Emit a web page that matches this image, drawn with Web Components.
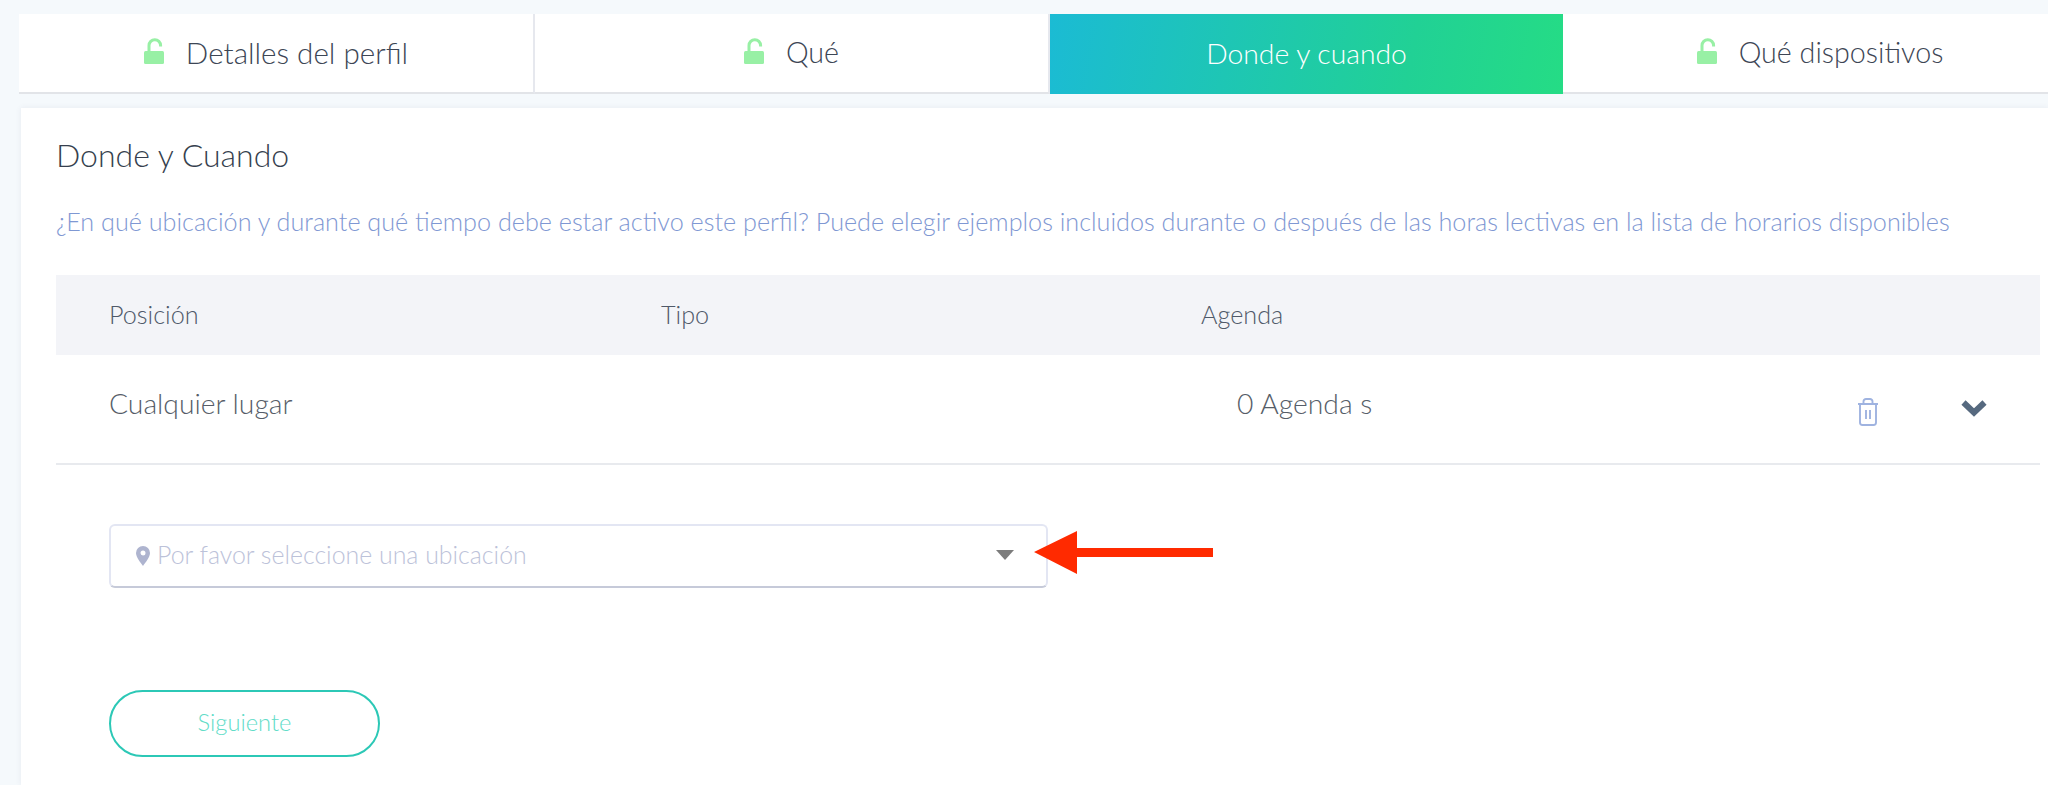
<!DOCTYPE html>
<html lang="es">
<head>
<meta charset="utf-8">
<title>Donde y cuando</title>
<style>
    html, body { margin: 0; padding: 0; height: 785px; overflow: hidden; background: #f5f9fc; }
    body { font-family: "Lato", "Noto Sans", sans-serif; font-weight: 300; }
</style>
</head>
<body>
<profile-page>
    <profile-tabs slot="tabs">
        <profile-tab locked>Detalles del perfil</profile-tab>
        <profile-tab locked style="font-size:28.7px">Qué</profile-tab>
        <profile-tab active style="font-size:28.3px">Donde y cuando</profile-tab>
        <profile-tab locked style="font-size:28.7px">Qué dispositivos</profile-tab>
    </profile-tabs>
    <where-card></where-card>
</profile-page>

<script>
class ProfilePage extends HTMLElement {
    constructor() {
        super();
        this.attachShadow({ mode: 'open' });
        this.shadowRoot.innerHTML = `
            <style>
                :host { display: block; padding: 14px 0 0 19px; }
                .body { margin: 14px 0 0 2px; }
            </style>
            <slot name="tabs"></slot>
            <div class="body"><slot></slot></div>
        `;
    }
}

class ProfileTabs extends HTMLElement {
    constructor() {
        super();
        this.attachShadow({ mode: 'open' });
        this.shadowRoot.innerHTML = `
            <style>
                :host { display: grid; grid-template-columns: 516px 515px 513px 516px; width: 2060px; height: 80px; background: #fff; }
            </style>
            <slot></slot>
        `;
    }
}

class ProfileTab extends HTMLElement {
    constructor() {
        super();
        this.attachShadow({ mode: 'open' });
        this.shadowRoot.innerHTML = `
            <style>
                :host { display: flex; align-items: center; justify-content: center; gap: 22px; box-sizing: border-box; height: 80px;
                    border-bottom: 2px solid #e2e4e8; border-right: 2px solid #e6e8ee; padding-bottom: 2px;
                    color: #3d4655; font-size: 29.6px; background: #fff; }
                :host([active]) { border: 0; padding: 0 0 2px 0; color: #fff; background: linear-gradient(100deg, #1bbbd4 0%, #21d195 70%, #25dc85 100%); }
                svg { width: 20px; height: 26px; margin-top: -2px; flex: none; }
            </style>
            <svg viewBox="0 0 20 26" part="lock"><path d="M5 14V7.500a5.800 5.800 0 0 1 11.600 0V8.500" fill="none" stroke="#98f0a5" stroke-width="3"/><rect x="0" y="13" width="20" height="13" rx="1.500" fill="#98f0a5"/></svg>
            <slot></slot>
        `;
        if (!this.hasAttribute('locked')) this.shadowRoot.querySelector('svg').remove();
    }
}

class WhereCard extends HTMLElement {
    constructor() {
        super();
        this.attachShadow({ mode: 'open' });
        this.shadowRoot.innerHTML = `
            <style>
                :host { display: block; position: relative; background: #fff; height: 677px; box-shadow: 0 0 6px rgba(60,70,100,.08); padding: 0 8px 0 35px; }
                h2 { margin: 0; padding-top: 28px; font-size: 32px; line-height: 38px; font-weight: 300; color: #363f4e; }
                p { margin: 32px 0 0; font-size: 25.2px; line-height: 30px; color: #7f98d3; white-space: nowrap; }
                .arrow { position: absolute; left: 1013px; top: 423px; width: 180px; height: 44px; }
            </style>
            <h2>Donde y Cuando</h2>
            <p>¿En qué ubicación y durante qué tiempo debe estar activo este perfil? Puede elegir ejemplos incluidos durante o después de las horas lectivas en la lista de horarios disponibles</p>
            <where-table></where-table>
            <location-select>Por favor seleccione una ubicación</location-select>
            <next-button>Siguiente</next-button>
            <svg class="arrow" viewBox="0 0 180 44"><path d="M0 21 43 0V17H179V26H43V43Z" fill="#ff2a00"/></svg>
        `;
    }
}

class WhereTable extends HTMLElement {
    constructor() {
        super();
        this.attachShadow({ mode: 'open' });
        this.shadowRoot.innerHTML = `
            <style>
                :host { display: block; width: 1984px; margin-top: 39px; font-size: 25.2px; }
                .row { display: grid; grid-template-columns: 552px 540px 1fr; align-items: center; padding-left: 53px; }
                .head { height: 80px; box-sizing: border-box; padding-bottom: 2px; background: #f3f4f8; color: #4f5969; }
                .item { height: 110px; box-sizing: border-box; padding-bottom: 12px; border-bottom: 2px solid #e8eaee; color: #565d68; font-size: 28.300px; }
                .last { display: flex; align-items: center; }
                .count { padding-left: 36px; flex: 1; }
                .trash { width: 22px; height: 28px; margin-top: 18px; }
                .chev { width: 26px; height: 18px; margin: 10px 53px 0 82px; }
            </style>
            <div class="row head"><span>Posición</span><span>Tipo</span><span>Agenda</span></div>
            <div class="row item">
                <span>Cualquier lugar</span><span></span>
                <div class="last">
                    <span class="count">0 Agenda s</span>
                    <svg class="trash" viewBox="0 0 22 28" fill="none" stroke="#9fb3e0" stroke-width="1.900"><path d="M1 6H21M3 6V24.500A2.500 2.500 0 0 0 5.500 27H16.500A2.500 2.500 0 0 0 19 24.500V6M6.500 6V3.500A2.500 2.500 0 0 1 9 1H13A2.500 2.500 0 0 1 15.500 3.500V6M9 12V21M13 12V21"/></svg>
                    <svg class="chev" viewBox="0 0 26 18" fill="none" stroke="#56697f" stroke-width="6"><path d="M2.500 3.500 13 13.500 23.500 3.500"/></svg>
                </div>
            </div>
        `;
    }
}

class LocationSelect extends HTMLElement {
    constructor() {
        super();
        this.attachShadow({ mode: 'open' });
        this.shadowRoot.innerHTML = `
            <style>
                :host { display: flex; align-items: center; box-sizing: border-box; width: 939px; height: 64px; margin: 59px 0 0 53px;
                    padding: 0 32px 0 25px; border: 2px solid #e3e6f3; border-bottom-color: #c6cad9; border-radius: 6px;
                    font-size: 24.900px; color: #bcc2d9; }
                .pin { width: 14px; height: 20px; margin-right: 7px; flex: none; }
                .text { flex: 1; margin-bottom: 5px; }
                .caret { width: 18px; height: 10px; flex: none; margin-top: -2px; }
            </style>
            <svg class="pin" viewBox="0 0 14 20"><path fill="#aeb4cf" fill-rule="evenodd" d="M7 0A7 7 0 0 0 0 7C0 11 4.500 16.500 7 20 9.500 16.500 14 11 14 7A7 7 0 0 0 7 0ZM7 4.500A2.500 2.500 0 1 1 7 9.500 2.500 2.500 0 0 1 7 4.500Z"/></svg>
            <span class="text"><slot></slot></span>
            <svg class="caret" viewBox="0 0 18 10"><path d="M0 0H18L9 10Z" fill="#7c7c7c"/></svg>
        `;
    }
}

class NextButton extends HTMLElement {
    constructor() {
        super();
        this.attachShadow({ mode: 'open' });
        this.shadowRoot.innerHTML = `
            <style>
                :host { display: flex; align-items: center; justify-content: center; box-sizing: border-box; width: 271px; height: 67px; margin: 102px 0 0 53px; padding-bottom: 4px;
                    border: 2px solid #2cc8b6; border-radius: 34px; font-size: 23.700px; color: #62dcc8; }
            </style>
            <slot></slot>
        `;
    }
}

customElements.define('profile-page', ProfilePage);
customElements.define('profile-tabs', ProfileTabs);
customElements.define('profile-tab', ProfileTab);
customElements.define('where-card', WhereCard);
customElements.define('where-table', WhereTable);
customElements.define('location-select', LocationSelect);
customElements.define('next-button', NextButton);
</script>
</body>
</html>
